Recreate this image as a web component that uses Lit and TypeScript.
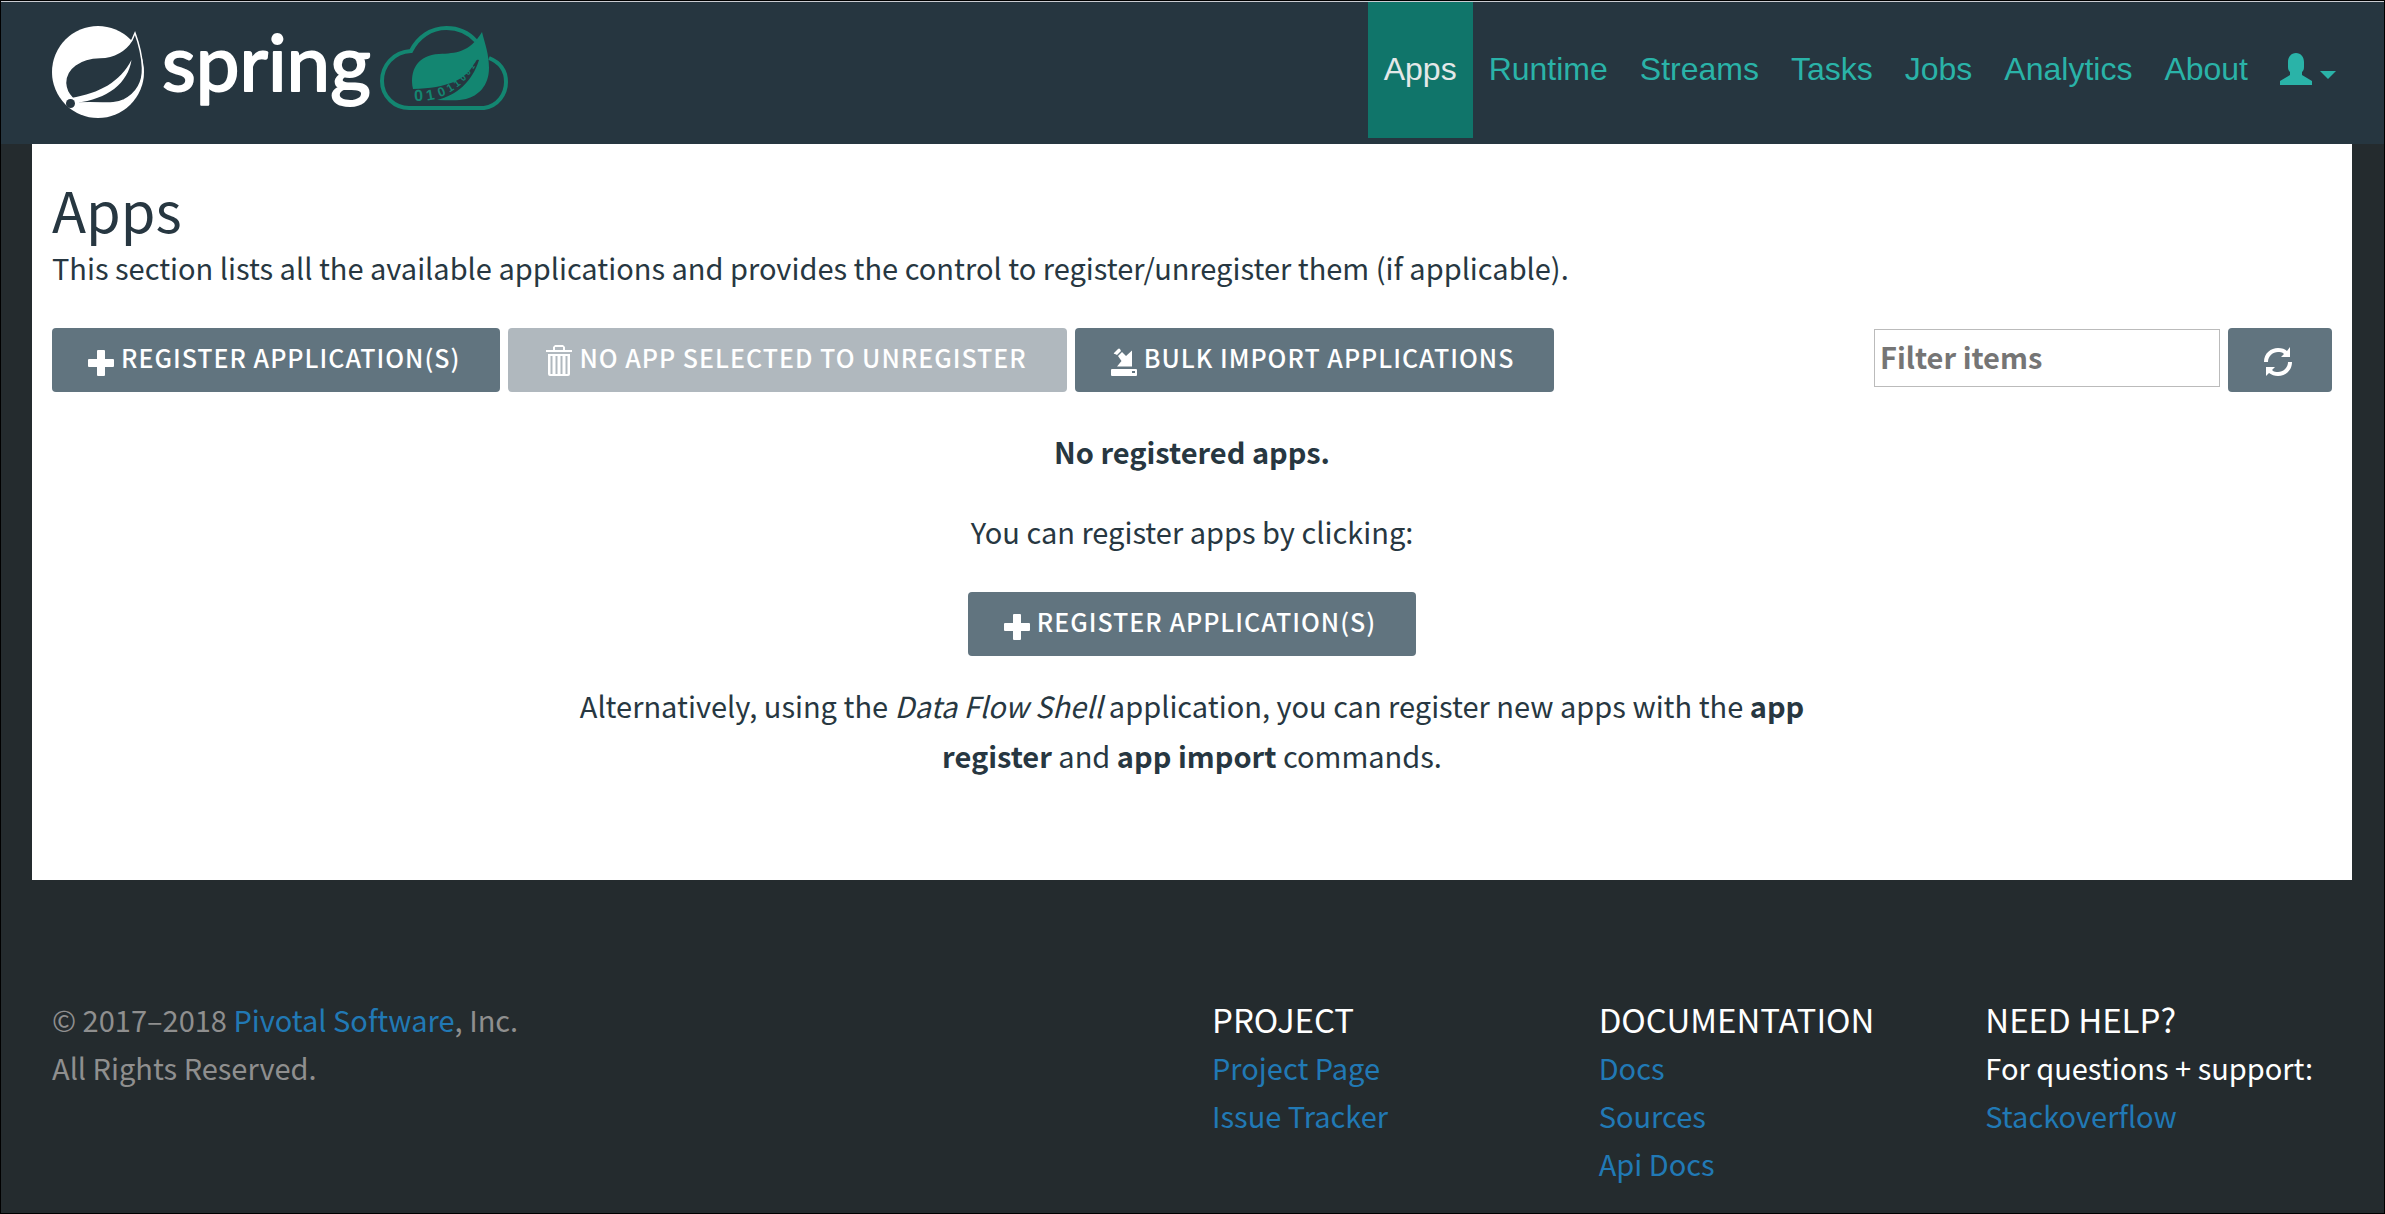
import { LitElement, html, css, svg } from "lit";
import { customElement, state } from "lit/decorators.js";

interface FooterColumn {
  title: string;
  note?: string;
  links: string[];
}

const NAV = ["Apps", "Runtime", "Streams", "Tasks", "Jobs", "Analytics", "About"];

const FOOTER: FooterColumn[] = [
  { title: "Project", links: ["Project Page", "Issue Tracker"] },
  { title: "Documentation", links: ["Docs", "Sources", "Api Docs"] },
  { title: "Need help?", note: "For questions + support:", links: ["Stackoverflow"] },
];

const ICONS = {
  plus: {
    width: 26,
    height: 26,
    shape: svg`<path d="M10 0h6q1 0 1 1v8h8q1 0 1 1v6q0 1-1 1h-8v8q0 1-1 1h-6q-1 0-1-1v-8H1q-1 0-1-1v-6q0-1 1-1h8V1q0-1 1-1z"/>`,
  },
  trash: {
    width: 28,
    height: 31,
    shape: svg`<path fill-rule="evenodd" d="M11 0h8l2 2v3h7v2H2V5h7V2zM11 2v3h8V2zM4 9h22v20q0 2-2 2H6q-2 0-2-2zM6.500 11v18h2V11zM11.500 11v18h2V11zM16.500 11v18h2V11zM21.500 11v18h2V11z"/>`,
  },
  load: {
    width: 26,
    height: 28,
    shape: svg`<path fill-rule="evenodd" d="M3 5l4-4q1-1 2 0l1 2-4 4-2-1q-2 0-1-1zM7 8l4-4 4 4 6-5.500V18.500H6L10.500 13zM1 21h24q1 0 1 1v5q0 1-1 1H1q-1 0-1-1v-5q0-1 1-1zM21 23v2h3v-2z"/>`,
  },
  refresh: {
    width: 28,
    height: 29,
    shape: svg`<path d="M0 15C0 6 7 1 14 1c4 0 7 1 9 3l3-4v10h-9l3-3c-2-2-4-2-6-2-5 0-10 4-10 10zM28 15c0 9-7 14-14 14-4 0-6-1-9-3l-3 3V20h9l-3 3c2 2 4 2 6 2 5 0 10-4 10-10z"/>`,
  },
  user: {
    width: 32,
    height: 32,
    shape: svg`<path d="M16 0c5 0 8 4 8 9v5c0 3-1 4-2 5v3l10 6v4H0v-4l10-6v-3c-1-1-2-2-2-5V9c0-5 3-9 8-9z"/>`,
  },
  caret: { width: 16, height: 8, shape: svg`<path d="M0 0h16L8 8z"/>` },
};

function icon(name: keyof typeof ICONS) {
  const { width, height, shape } = ICONS[name];
  return html`<svg
    class="icon"
    width=${width}
    height=${height}
    viewBox="0 0 ${width} ${height}"
    aria-hidden="true"
  >
    ${shape}
  </svg>`;
}

@customElement("brand-logo")
export class BrandLogo extends LitElement {
  static styles = css`
    :host {
      display: block;
    }
    .logo {
      display: block;
      overflow: visible;
    }
    .word {
      font: 400 78px Lato, sans-serif;
      fill: #fff;
      stroke: #fff;
      stroke-width: 2;
      stroke-linejoin: round;
    }
    .bits {
      font-family: "Liberation Sans", sans-serif;
      font-weight: 700;
      fill: #138671;
    }
  `;

  render() {
    return html`<svg class="logo" width="456" height="92" viewBox="0 0 456 92">
      <circle cx="46" cy="46" r="46" fill="#fff" />
      <path
        d="M80 14C73 25 62 31 48 31.500C28 32 13.500 42 13.500 57C14 65 17 68 21 73L27 77C50 76 62 79 72 74C85 67 91 56 90.500 42C90 29 87 18 83 7Z"
        fill="#263640"
        stroke="#fff"
        stroke-width="1.500"
      />
      <path d="M19 72C48 67 68 56 79.500 34C76 57 56 73 24 77Z" fill="#fff" />
      <circle cx="18.500" cy="77.500" r="4.500" fill="#263640" />
      <text class="word" x="110" y="65">spring</text>
      <path
        d="M424 15C415 5 405 2 394.500 2C379 2 366 11 359 25C341 26 330 40 330 55C330 71 343 82 357 82H432C446 80 454 68 454 56C454 44 447 36 437 32"
        fill="none"
        stroke="#138671"
        stroke-width="4"
      />
      <path
        d="M430 6C433 18 437 28 437 42C437 60 426 70 414 73C406 75 396 74 385 74C405 69 420 56 427 34C424 33 425 34 422 38C413 54 396 62 361 63C357 44 366 29 387 28C404 27 417 27 430 6Z"
        fill="#138671"
      />
      <g class="bits" text-anchor="middle">
        <text font-size="16" transform="translate(367 75) rotate(-4)">0</text>
        <text font-size="15" transform="translate(379 74) rotate(-10)">1</text>
        <text font-size="13" transform="translate(391 70) rotate(-22)">0</text>
        <text font-size="11" transform="translate(400 65) rotate(-32)">1</text>
        <text font-size="10" transform="translate(407 60) rotate(-38)">1</text>
        <text font-size="9" transform="translate(413 54) rotate(-44)">0</text>
        <text font-size="8" transform="translate(418 48) rotate(-50)">0</text>
        <text font-size="7" transform="translate(422 42) rotate(-56)">1</text>
      </g>
    </svg>`;
  }
}

@customElement("app-root")
export class AppRoot extends LitElement {
  @state() private active = "Apps";

  static styles = css`
    :host {
      display: block;
      box-sizing: border-box;
      min-height: 100vh;
      border: 1px solid #000;
      background: #242b2e;
      color: #273741;
      font: 400 29px/50px "Noto Sans CJK SC", "Open Sans", sans-serif;
    }
    a {
      color: #2179b5;
      text-decoration: none;
    }
    h1,
    h2,
    p,
    ul {
      margin: 0;
      padding: 0;
      font-weight: 400;
    }
    ul {
      list-style: none;
    }
    .icon {
      display: block;
      flex: none;
      fill: currentColor;
    }

    .header {
      display: flex;
      justify-content: space-between;
      align-items: flex-start;
      box-sizing: border-box;
      min-height: 143px;
      padding: 0 32px 0 51px;
      border-top: 1px solid #c9ccd2;
      background: #263640;
    }
    .brand {
      padding-top: 24px;
    }
    .nav {
      display: flex;
      font: 32px/134px "Liberation Sans", sans-serif;
    }
    .nav-link,
    .user {
      display: flex;
      align-items: center;
      padding: 0 16px 2px;
      color: #2ab3a8;
    }
    .nav-link.active {
      background: #10756a;
      color: #e4e8e8;
    }
    .user {
      gap: 8px;
      border: 0;
      background: none;
    }
    .user .icon:last-child {
      margin-top: 12px;
    }

    .content {
      margin: 0 32px 0 31px;
      padding: 32px 20px 100px;
      background: #fff;
    }
    .title {
      font-size: 56px;
      line-height: 66px;
    }
    .toolbar {
      display: flex;
      justify-content: space-between;
      margin-top: 36px;
    }
    .group {
      display: flex;
      align-items: flex-start;
      gap: 8px;
    }
    .btn {
      display: flex;
      align-items: flex-end;
      justify-content: center;
      gap: 7px;
      box-sizing: border-box;
      height: 64px;
      padding: 0 40px 16px 36px;
      border: 0;
      border-radius: 4px;
      background: #61747f;
      color: #fff;
      font: 500 25px/38px "Noto Sans CJK SC", "Open Sans", sans-serif;
      letter-spacing: 1px;
      text-transform: uppercase;
      white-space: nowrap;
    }
    .btn:disabled {
      background: #b0b8be;
    }
    .filter {
      box-sizing: border-box;
      width: 346px;
      height: 58px;
      margin-top: 1px;
      padding: 0 5px 4px;
      border: 1px solid #bbb;
      border-radius: 0;
      background: #fff;
      color: #273741;
      font: 700 29px "Noto Sans CJK SC", "Open Sans", sans-serif;
    }
    .filter::placeholder {
      color: #757575;
      opacity: 1;
    }

    .empty {
      display: flex;
      flex-direction: column;
      align-items: center;
      margin-top: 34px;
      text-align: center;
    }
    .hint {
      margin: 30px 0 36px;
    }
    .shell {
      max-width: 1240px;
      margin-top: 24px;
    }

    .footer {
      display: grid;
      grid-template-columns: 3fr 1fr 1fr 1fr;
      margin: 0 32px 0 31px;
      padding: 115px 0 20px;
      line-height: 48px;
      color: #8f8f8f;
    }
    .column {
      padding-left: 20px;
      white-space: nowrap;
    }
    .column-title {
      font-size: 33px;
      line-height: 48px;
      text-transform: uppercase;
      color: #fff;
    }
    .note {
      color: #fff;
    }
  `;

  private select(event: Event, name: string) {
    event.preventDefault();
    this.active = name;
  }

  render() {
    return html`
      <header class="header">
        <a class="brand" href="#" aria-label="Spring Cloud Data Flow"><brand-logo></brand-logo></a>
        <nav class="nav">
          ${NAV.map(
            (name) => html`<a
              class="nav-link ${name === this.active ? "active" : ""}"
              href="#"
              @click=${(e: Event) => this.select(e, name)}
              >${name}</a
            >`
          )}
          <button class="user" type="button" aria-label="User menu">${icon("user")}${icon("caret")}</button>
        </nav>
      </header>

      <main class="content">
        <h1 class="title">Apps</h1>
        <p>
          This section lists all the available applications and provides the control to
          register/unregister them (if applicable).
        </p>
        <div class="toolbar">
          <div class="group">
            <button class="btn" type="button">${icon("plus")}<span>Register application(s)</span></button>
            <button class="btn" type="button" disabled>
              ${icon("trash")}<span>No app selected to unregister</span>
            </button>
            <button class="btn" type="button">${icon("load")}<span>Bulk import applications</span></button>
          </div>
          <div class="group">
            <input class="filter" type="text" placeholder="Filter items" aria-label="Filter items" />
            <button class="btn" type="button" aria-label="Refresh">${icon("refresh")}</button>
          </div>
        </div>

        <section class="empty">
          <p><strong>No registered apps.</strong></p>
          <p class="hint">You can register apps by clicking:</p>
          <button class="btn" type="button">${icon("plus")}<span>Register application(s)</span></button>
          <p class="shell">
            Alternatively, using the <em>Data Flow Shell</em> application, you can register new apps
            with the <strong>app register</strong> and <strong>app import</strong> commands.
          </p>
        </section>
      </main>

      <footer class="footer">
        <div class="column">
          <p>© 2017–2018 <a href="#">Pivotal Software</a>, Inc.</p>
          <p>All Rights Reserved.</p>
        </div>
        ${FOOTER.map(
          (column) => html`<div class="column">
            <h2 class="column-title">${column.title}</h2>
            ${column.note ? html`<p class="note">${column.note}</p>` : ""}
            <ul>
              ${column.links.map((link) => html`<li><a href="#">${link}</a></li>`)}
            </ul>
          </div>`
        )}
      </footer>
    `;
  }
}
